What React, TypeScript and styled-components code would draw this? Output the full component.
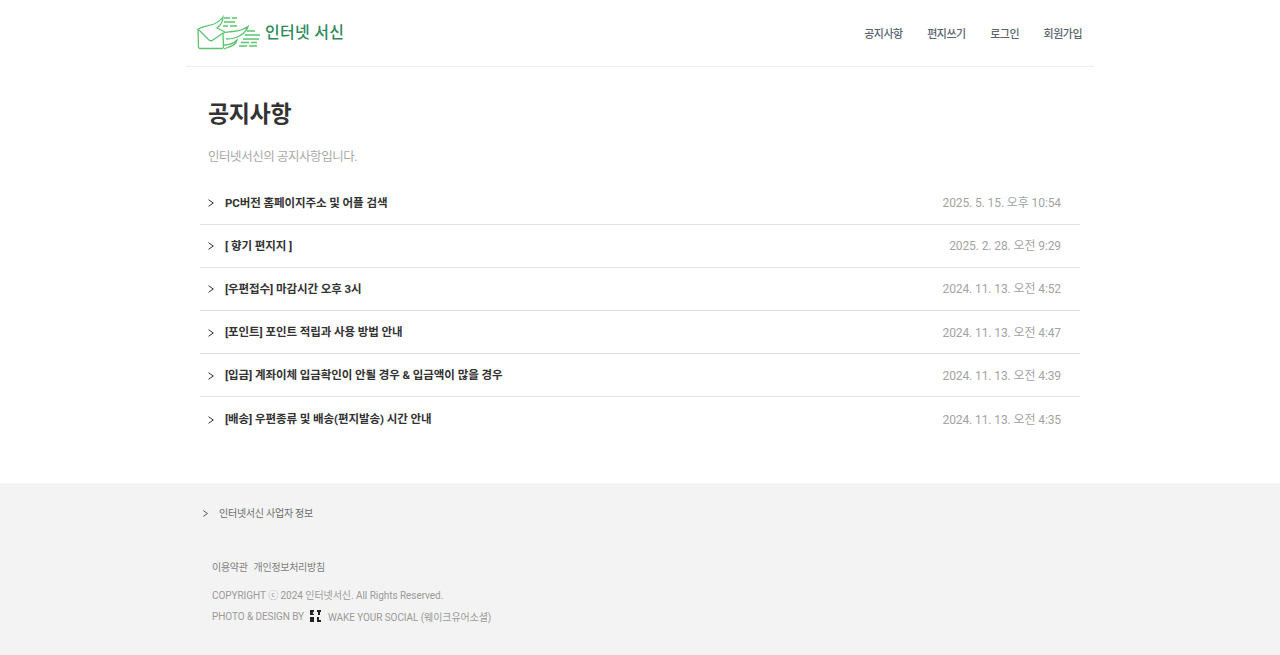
import styled, { createGlobalStyle } from 'styled-components';

const notices = [
	{ title: 'PC버전 홈페이지주소 및 어플 검색', date: '2025. 5. 15. 오후 10:54' },
	{ title: '[ 향기 편지지 ]', date: '2025. 2. 28. 오전 9:29' },
	{ title: '[우편접수] 마감시간 오후 3시', date: '2024. 11. 13. 오전 4:52' },
	{ title: '[포인트] 포인트 적립과 사용 방법 안내', date: '2024. 11. 13. 오전 4:47' },
	{ title: '[입금] 계좌이체 입금확인이 안될 경우 & 입금액이 많을 경우', date: '2024. 11. 13. 오전 4:39' },
	{ title: '[배송] 우편종류 및 배송(편지발송) 시간 안내', date: '2024. 11. 13. 오전 4:35' },
];

const navItems = ['공지사항', '편지쓰기', '로그인', '회원가입'];

const Global = createGlobalStyle`
	html, body {
		margin: 0;
		padding: 0;
		background: #fff;
		font-family: Roboto, 'Noto Sans CJK KR', 'Noto Sans', sans-serif;
	}
	* { box-sizing: border-box; }
`;

function Chevron({ size = 8 }: { size?: number }) {
	return (
		<svg width={size} height={size} viewBox="0 0 8 8" fill="none" stroke="currentColor" strokeWidth="1">
			<path d="M1.5 0.7 L6.3 4 L1.5 7.3" />
		</svg>
	);
}

function LogoMark() {
	return (
		<svg width="66" height="36" viewBox="0 0 66 36" fill="none" stroke="#5cc46f" strokeWidth="1.3">
			<path d="M1 14 L1.5 32 Q1.5 33.5 3 33.5 L25 33.5 Q26.5 33.5 26.5 32 L26 18" />
			<path d="M1 14 L12 25 Q14 26.5 16 25 L26 18" />
			<path d="M1 14 C6 11 12 11 17 9 C21 7 24 5 26 2 C26 6 24 10 20 13 L28 17" />
			<path d="M26 18 C33 16 39 17 44 15 C47 14 49 13 51 11.5 C50 15 47 18 44 20 C40 23 36 24 29 24" />
			<path d="M27 30 C32 30 37 28 40 25 C39 29 36 31 32 32 L27 34" />
			<path d="M27 3 H33 M35 3 H40 M27 7 H38 M26 11 H31 M33 11 H40" />
			<path d="M50 16 H58 M48 20 H63 M46 24 H62 M44 27.5 H52 M54 27.5 H60 M42 31 H50 M52 31 H60" />
		</svg>
	);
}

export default function App(): JSX.Element {
	return (
		<>
			<Global />
			<Page>
				<Header>
					<Logo>
						<LogoMark />
						<LogoText>인터넷 서신</LogoText>
					</Logo>
					<Nav>
						{navItems.map((item) => (
							<NavItem key={item}>{item}</NavItem>
						))}
					</Nav>
				</Header>
				<Main>
					<Title>공지사항</Title>
					<Description>인터넷서신의 공지사항입니다.</Description>
					<NoticeList>
						{notices.map((notice) => (
							<NoticeRow key={notice.date}>
								<RowIcon>
									<Chevron />
								</RowIcon>
								<NoticeTitle>{notice.title}</NoticeTitle>
								<NoticeDate>{notice.date}</NoticeDate>
							</NoticeRow>
						))}
					</NoticeList>
				</Main>
				<Footer>
					<FooterInner>
						<BizInfo>
							<BizIcon>
								<Chevron size={7} />
							</BizIcon>
							인터넷서신 사업자 정보
						</BizInfo>
						<FooterLinks>
							<span>이용약관</span>
							<span>개인정보처리방침</span>
						</FooterLinks>
						<Copyright>COPYRIGHT ⓒ 2024 인터넷서신. All Rights Reserved.</Copyright>
						<Credit>
							PHOTO &amp; DESIGN BY
							<CreditMark>
								<svg width="11" height="12" viewBox="0 0 11 12" fill="#222">
									<path d="M0 0h4v1.5L2.5 3 4 4.5V5H0zM7 0h4v2H10v3H8V2H7zM0 7h4v5H0zM7 7h2v3h2v2H7z" />
								</svg>
							</CreditMark>
							WAKE YOUR SOCIAL (웨이크유어소셜)
						</Credit>
					</FooterInner>
				</Footer>
			</Page>
		</>
	);
}

const Page = styled.div`
	min-height: 655px;
	display: flex;
	flex-direction: column;
`;

const Header = styled.header`
	width: 908px;
	height: 67px;
	margin: 0 auto;
	padding: 0 12px 0 11px;
	display: flex;
	align-items: center;
	justify-content: space-between;
	border-bottom: 1px solid #eeeeee;
`;

const Logo = styled.div`
	display: flex;
	align-items: center;
	gap: 2px;
	height: 40px;
	margin-top: -1px;
`;

const LogoText = styled.span`
	color: #2f8a5b;
	font-size: 16px;
	font-weight: 500;
	letter-spacing: 0.3px;
	margin-top: -3px;
`;

const Nav = styled.nav`
	display: flex;
	gap: 24.5px;
	margin-top: -1px;
`;

const NavItem = styled.a`
	color: #5b6472;
	font-size: 11px;
	font-weight: 500;
	letter-spacing: -0.5px;
`;

const Main = styled.main`
	width: 910px;
	height: 416px;
	margin: 0 auto;
	padding: 0 15px;
`;

const Title = styled.h1`
	margin: 28px 0 0 8px;
	height: 40px;
	color: #333333;
	font-size: 23px;
	font-weight: 700;
	line-height: 40px;
	letter-spacing: -0.35px;
`;

const Description = styled.p`
	margin: 9px 0 0 8px;
	height: 26px;
	color: #a8a8a8;
	font-size: 12.5px;
	line-height: 26px;
	letter-spacing: -0.45px;
`;

const NoticeList = styled.ul`
	list-style: none;
	margin: 11.5px 0 0;
	padding: 0;
`;

const NoticeRow = styled.li`
	height: 43.2px;
	display: flex;
	align-items: center;
	padding: 0 19px 2px 7px;
	border-bottom: 1px solid #e2e2e2;

	&:last-child {
		border-bottom: none;
	}
`;

const RowIcon = styled.span`
	display: flex;
	width: 18px;
	color: #333333;
	margin-top: 3px;
`;

const NoticeTitle = styled.span`
	flex: 1;
	color: #333333;
	font-size: 11.5px;
	font-weight: 700;
	letter-spacing: -0.08px;
`;

const NoticeDate = styled.span`
	color: #a3a3a3;
	font-size: 12px;
	letter-spacing: -0.1px;
	font-variant-numeric: tabular-nums;
`;

const Footer = styled.footer`
	flex: 1;
	height: 172px;
	background: #f3f3f3;
`;

const FooterInner = styled.div`
	width: 880px;
	margin: 0 auto;
	padding: 20px 0 0 2px;
`;

const BizInfo = styled.div`
	display: flex;
	align-items: center;
	height: 18px;
	color: #6b6b6b;
	font-size: 10px;
	letter-spacing: -0.25px;
`;

const BizIcon = styled.span`
	display: flex;
	width: 17px;
	color: #444444;
	margin-top: 3px;
`;

const FooterLinks = styled.div`
	display: flex;
	gap: 6px;
	margin: 38px 0 0 10px;
	height: 18px;
	color: #808080;
	font-size: 10px;
	line-height: 18px;
	letter-spacing: -0.3px;
`;

const Copyright = styled.div`
	margin: 10px 0 0 10px;
	height: 18px;
	color: #9a9a9a;
	font-size: 10px;
	line-height: 18px;
	letter-spacing: -0.05px;
`;

const Credit = styled.div`
	display: flex;
	align-items: center;
	margin: 2px 0 0 10px;
	height: 18px;
	color: #9a9a9a;
	font-size: 10px;
	letter-spacing: -0.08px;
`;

const CreditMark = styled.span`
	display: flex;
	margin: 0 7px 0 6px;
`;
